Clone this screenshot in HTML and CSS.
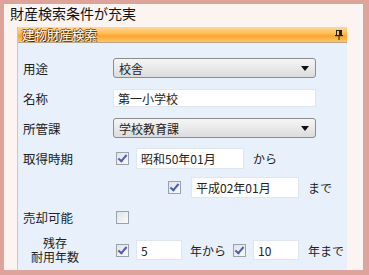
FILE: index.html
```html
<!DOCTYPE html>
<html lang="ja">
<head>
    <meta charset="UTF-8">
    <title>財産検索条件が充実</title>
    <link rel="stylesheet" href="styles.css">
</head>
<body>
    <div class="frame">
        <div class="heading">財産検索条件が充実</div>
        <div class="panel">
            <div class="panel-head">
                <span class="panel-title">建物財産検索</span>
                <svg class="pin" width="8" height="10" viewBox="0 0 8 10">
                    <rect x="1.5" y="0.5" width="5" height="5" fill="none" stroke="#222" stroke-width="1"/>
                    <rect x="4" y="1" width="2" height="4" fill="#222"/>
                    <rect x="0" y="5" width="8" height="1.2" fill="#222"/>
                    <rect x="3.5" y="6" width="1" height="4" fill="#222"/>
                </svg>
            </div>
            <div class="panel-body">
                <div class="row">
                    <div class="label">用途</div>
                    <div class="select">校舎<span class="arrow"></span></div>
                </div>
                <div class="row">
                    <div class="label">名称</div>
                    <div class="input wide">第一小学校</div>
                </div>
                <div class="row">
                    <div class="label">所管課</div>
                    <div class="select">学校教育課<span class="arrow"></span></div>
                </div>
                <div class="row period">
                    <div class="label">取得時期</div>
                    <span class="check on"></span>
                    <div class="input date">昭和50年01月</div>
                    <span class="unit">から</span>
                </div>
                <div class="row period-end">
                    <span class="check on"></span>
                    <div class="input date">平成02年01月</div>
                    <span class="unit">まで</span>
                </div>
                <div class="row sale">
                    <div class="label">売却可能</div>
                    <span class="check"></span>
                </div>
                <div class="row life">
                    <div class="label two-line">残存<br>耐用年数</div>
                    <span class="check on"></span>
                    <div class="input num">5</div>
                    <span class="unit small">年から</span>
                    <span class="check on"></span>
                    <div class="input num">10</div>
                    <span class="unit">年まで</span>
                </div>
            </div>
        </div>
    </div>
</body>
</html>
```

FILE: styles.css
```css
body {
    margin: 0;
    font-family: "Noto Sans CJK JP", "DejaVu Sans", sans-serif;
    background-color: #dea49c;
}
.frame {
    width: 359px;
    height: 266px;
    margin: 4px 6px 5px 4px;
    background-color: #fcf4f1;
    overflow: hidden;
}
.heading {
    font-size: 14px;
    line-height: 18px;
    padding: 0 0 0 6px;
    color: #111;
}
.panel {
    margin: 5px 16px 0 13px;
    height: 250px;
    background-color: #e8f0fb;
    border-left: 1px solid #bccbe0;
}
.panel-head {
    height: 15px;
    display: flex;
    align-items: center;
    justify-content: space-between;
    padding: 0 4px 0 4px;
    background: linear-gradient(to bottom, #ffd79a 0%, #ffbb50 45%, #f9a630 60%, #ffc565 100%);
    border-bottom: 1px solid #b9a58a;
}
.panel-title {
    font-size: 12.5px;
    color: #fff;
    text-shadow: 1px 1px 0 #5a3000, -1px 0 0 #7a4000, 0 -1px 0 #8a4c00;
    line-height: 15px;
}
.pin {
    display: block;
}
.panel-body {
    padding: 15px 0 0 5px;
    font-size: 12px;
    color: #222;
}
.row {
    display: flex;
    align-items: center;
    height: 20px;
    margin-bottom: 10px;
}
.label {
    width: 90px;
    font-size: 12.5px;
}
.two-line {
    font-size: 12px;
    line-height: 14px;
    text-align: center;
    width: 64px;
    margin-right: 26px;
}
.select {
    width: 203px;
    height: 20px;
    box-sizing: border-box;
    border: 1px solid #8c8c8c;
    border-radius: 3px;
    background: linear-gradient(to bottom, #f6f6f6, #dcdcdc);
    display: flex;
    align-items: center;
    justify-content: space-between;
    padding: 0 6px 0 5px;
    font-size: 12px;
}
.arrow {
    width: 0;
    height: 0;
    border-left: 4px solid transparent;
    border-right: 4px solid transparent;
    border-top: 5px solid #111;
}
.input {
    height: 18px;
    background-color: #fff;
    border: 1px solid #dfe6ee;
    display: flex;
    align-items: center;
    padding: 0 4px;
    font-size: 12px;
    box-sizing: border-box;
}
.wide {
    width: 203px;
}
.date {
    width: 108px;
    height: 21px;
    margin-left: 7px;
}
.num {
    width: 46px;
    height: 20px;
    margin-left: 7px;
}
.check {
    width: 13px;
    height: 13px;
    margin-left: 3px;
    border: 1px solid #9aa3ad;
    background: linear-gradient(to bottom right, #e0e3e6, #fafafa);
    box-sizing: border-box;
    position: relative;
}
.check.on::after {
    content: "";
    position: absolute;
    left: 3px;
    top: 0px;
    width: 3px;
    height: 7px;
    border-right: 2px solid #4a5fb6;
    border-bottom: 2px solid #4a5fb6;
    transform: rotate(40deg);
}
.unit {
    margin-left: 9px;
    font-size: 12px;
}
.unit.small {
    margin-left: 8px;
    margin-right: 4px;
}
.period {
    margin-top: 4px;
    margin-bottom: 9px;
}
.period-end {
    padding-left: 142px;
}
.period-end .date {
    margin-left: 10px;
}
.sale {
    margin-bottom: 9px;
}
.life {
    height: 28px;
}
```
